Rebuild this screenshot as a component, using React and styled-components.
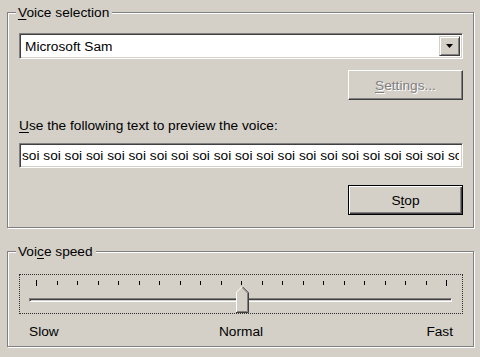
import React from "react";
import styled, { createGlobalStyle } from "styled-components";

const FACE = "#d4d0c8";

const GlobalStyle = createGlobalStyle`
  html, body {
    margin: 0;
    background: ${FACE};
  }
  body {
    font-family: "Liberation Sans", Arial, sans-serif;
    font-size: 13.7px;
    color: #000;
  }
`;

const Page = styled.div`
  padding: 0 6px 11px 7px;
  display: flex;
  flex-direction: column;
`;

const GroupBox = styled.div`
  margin-top: ${(p) => p.$top}px;
  border: 1px solid #808080;
  box-shadow: inset 1px 1px #fff, 1px 1px #fff;
  padding: 0 10px ${(p) => p.$bottom}px 11px;
  display: flex;
  flex-direction: column;
`;

const Caption = styled.span`
  align-self: flex-start;
  margin: -8px 0 0 -3px;
  padding: 0 3px 0 2px;
  line-height: 16px;
  background: ${FACE};
`;

const Key = styled.span`
  text-decoration: underline;
  text-underline-offset: 2px;
`;

const ComboBox = styled.div`
  margin-top: 12px;
  height: 26px;
  box-sizing: border-box;
  background: #fff;
  border: 1px solid;
  border-color: #808080 #fff #fff #808080;
  box-shadow: inset 1px 1px #404040, inset -1px -1px ${FACE};
  padding: 2px;
  display: flex;
  align-items: stretch;
`;

const ComboText = styled.div`
  flex: 1;
  padding-left: 3px;
  display: flex;
  align-items: center;
`;

const DropButton = styled.div`
  width: 21px;
  box-sizing: border-box;
  background: ${FACE};
  border: 1px solid;
  border-color: ${FACE} #404040 #404040 ${FACE};
  box-shadow: inset 1px 1px #fff, inset -1px -1px #808080;
  display: flex;
  align-items: center;
  justify-content: center;
`;

const Button = styled.div`
  align-self: flex-end;
  margin-top: ${(p) => p.$top}px;
  width: 115px;
  height: 30px;
  box-sizing: border-box;
  background: ${FACE};
  display: flex;
  align-items: center;
  justify-content: center;
  border: 1px solid;
  border-color: ${(p) => (p.$default ? "#000" : `#fff #404040 #404040 #fff`)};
  box-shadow: ${(p) =>
    p.$default
      ? `inset 1px 1px #fff, inset -1px -1px #404040, inset -2px -2px #808080`
      : `inset -1px -1px #808080`};
  color: ${(p) => (p.$disabled ? "#808080" : "#000")};
  text-shadow: ${(p) => (p.$disabled ? "1px 1px #fff" : "none")};
`;

const FieldLabel = styled.div`
  margin-top: 18px;
  line-height: 16px;
`;

const TextField = styled.input`
  margin: 9px 0 0;
  height: 25px;
  box-sizing: border-box;
  background: #fff;
  border: 1px solid;
  border-color: #808080 #fff #fff #808080;
  box-shadow: inset 1px 1px #404040, inset -1px -1px ${FACE};
  padding: 0 3px 0 2px;
  font: inherit;
  color: #000;
  outline: none;
`;

const Slider = styled.div`
  position: relative;
  margin-top: 14px;
  height: 40px;
  box-sizing: border-box;
  border: 1px dotted #303030;
`;

const TickRow = styled.div`
  display: flex;
  justify-content: space-between;
  padding: 0 15px 0 16px;
  margin-top: 5px;
  height: 6px;
  align-items: flex-start;
`;

const Tick = styled.span`
  width: 1px;
  height: ${(p) => (p.$end ? 6 : 4)}px;
  margin-top: ${(p) => (p.$end ? 0 : 1)}px;
  background: #000;
`;

const Track = styled.div`
  margin: 12px 10px 0 9px;
  height: 4px;
  box-sizing: border-box;
  border: 1px solid;
  border-color: #808080 #fff #fff #808080;
  box-shadow: inset 1px 1px #404040;
`;

const Thumb = styled.svg`
  position: absolute;
  top: 11px;
  display: block;
`;

const Scale = styled.div`
  margin-top: 10px;
  padding: 0 10px;
  line-height: 16px;
  display: grid;
  grid-template-columns: 1fr auto 1fr;
`;

const ScaleLabel = styled.span`
  justify-self: ${(p) => p.$align};
`;

const TICKS = 21;
const speed = 10;

export default function App() {
  const soi = Array(40).fill("soi").join(" ");
  const range = 447 - 36;
  const thumbLeft = 16 + (range * speed) / (TICKS - 1) - 6;

  return (
    <>
      <GlobalStyle />
      <Page>
        <GroupBox $top={12} $bottom={12}>
          <Caption>
            <Key>V</Key>oice selection
          </Caption>
          <ComboBox>
            <ComboText>Microsoft Sam</ComboText>
            <DropButton>
              <svg width="7" height="4" viewBox="0 0 7 4">
                <path d="M0 0h7L3.5 4z" fill="#000" />
              </svg>
            </DropButton>
          </ComboBox>
          <Button $top={11} $disabled>
            <span>
              <Key>S</Key>ettings...
            </span>
          </Button>
          <FieldLabel>
            <Key>U</Key>se the following text to preview the voice:
          </FieldLabel>
          <TextField readOnly value={soi} />
          <Button $top={17} $default>
            <span>
              S<Key>t</Key>op
            </span>
          </Button>
        </GroupBox>

        <GroupBox $top={23} $bottom={6}>
          <Caption>
            Voi<Key>c</Key>e speed
          </Caption>
          <Slider>
            <TickRow>
              {Array.from({ length: TICKS }, (_, i) => (
                <Tick key={i} $end={i === 0 || i === TICKS - 1} />
              ))}
            </TickRow>
            <Track />
            <Thumb
              width="13"
              height="27"
              viewBox="0 0 13 27"
              style={{ left: thumbLeft }}
            >
              <path d="M0 6L6 0L12 6V26H0Z" fill={FACE} />
              <path d="M0.5 26V6.2L6.2 0.5" stroke="#fff" fill="none" />
              <path d="M6.5 0.8L12.5 6.8V26.5H0" stroke="#404040" fill="none" />
              <path d="M6.5 2L11.5 7V25.5H1" stroke="#808080" fill="none" />
            </Thumb>
          </Slider>
          <Scale>
            <ScaleLabel $align="start">Slow</ScaleLabel>
            <ScaleLabel $align="center">Normal</ScaleLabel>
            <ScaleLabel $align="end">Fast</ScaleLabel>
          </Scale>
        </GroupBox>
      </Page>
    </>
  );
}
